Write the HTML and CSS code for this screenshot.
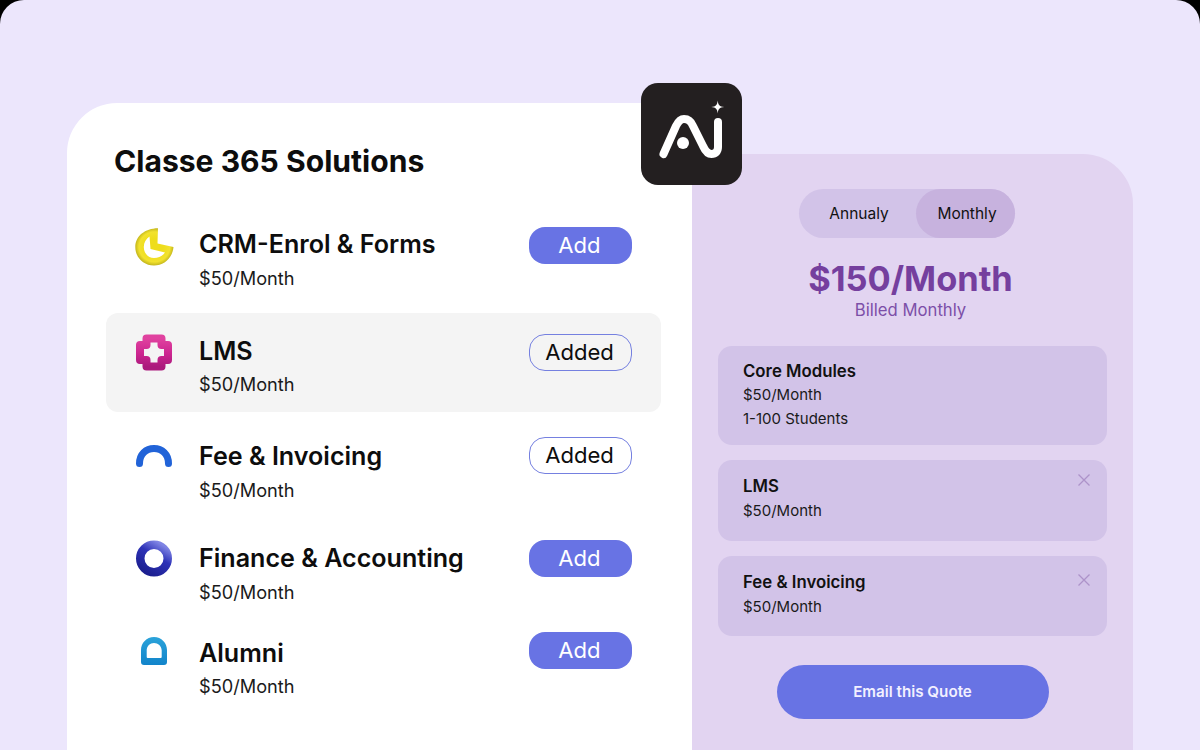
FILE: index.html
```html
<!DOCTYPE html>
<html lang="en">
<head>
<meta charset="utf-8">
<title>Classe 365 Solutions</title>
<link rel="stylesheet" href="styles.css">
</head>
<body>
<main class="stage">
  <section class="solutions">
    <h1 class="solutions-title">Classe 365 Solutions</h1>
    <ul class="module-list">
      <li class="module module-crm">
        <svg class="module-icon" viewBox="0 0 40 40"><defs><radialGradient id="gy" cx="0.5" cy="0.5" r="0.56"><stop offset="0.4" stop-color="#eedd1c"/><stop offset="0.72" stop-color="#f2e22e"/><stop offset="1" stop-color="#a89c12"/></radialGradient></defs><path transform="translate(2 1)" fill-rule="evenodd" d="M23 2.300C10 2.500 .3 10 .3 21C.3 31 8 39.500 19 39.500C29 39.500 37.500 32 38.500 21L22.500 17.500ZM14.500 10.500C11 13 8.800 16.500 8.800 21C8.800 27 13 32 19 32C23.500 32 27.500 30 30 26.500L15.500 23Z" fill="url(#gy)"/></svg>
        <div class="module-text"><h2 class="module-name">CRM-Enrol &amp; Forms</h2><p class="module-price">$50/Month</p></div>
        <span class="pill pill-add">Add</span>
      </li>
      <li class="module module-lms is-selected">
        <svg class="module-icon" viewBox="0 0 40 40"><defs><linearGradient id="gp" x1="0" y1="0" x2="0" y2="1"><stop offset="0" stop-color="#e0429f"/><stop offset="0.55" stop-color="#cc2590"/><stop offset="1" stop-color="#ab1a7c"/></linearGradient></defs><path d="M13.500 7.500H28.500V14H35V29H28.500V35.500H13.500V29H7V14H13.500Z" fill="none" stroke="url(#gp)" stroke-width="8" stroke-linejoin="round"/></svg>
        <div class="module-text"><h2 class="module-name">LMS</h2><p class="module-price">$50/Month</p></div>
        <span class="pill pill-added">Added</span>
      </li>
      <li class="module module-fee">
        <svg class="module-icon" viewBox="0 0 40 40"><path d="M6.500 26.500C6.500 17 13 11.500 21 11.500S35.500 17 35.500 26.500" fill="none" stroke="#2163d8" stroke-width="7" stroke-linecap="round"/></svg>
        <div class="module-text"><h2 class="module-name">Fee &amp; Invoicing</h2><p class="module-price">$50/Month</p></div>
        <span class="pill pill-added">Added</span>
      </li>
      <li class="module module-finance">
        <svg class="module-icon" viewBox="0 0 40 40"><defs><linearGradient id="gb" x1="0.8" y1="0" x2="0.2" y2="1"><stop offset="0" stop-color="#7f84e4"/><stop offset="0.4" stop-color="#2e33b8"/><stop offset="1" stop-color="#1c1f90"/></linearGradient></defs><circle cx="21" cy="19.500" r="13.750" fill="none" stroke="url(#gb)" stroke-width="8.500"/></svg>
        <div class="module-text"><h2 class="module-name">Finance &amp; Accounting</h2><p class="module-price">$50/Month</p></div>
        <span class="pill pill-add">Add</span>
      </li>
      <li class="module module-alumni">
        <svg class="module-icon" viewBox="0 0 40 40"><defs><linearGradient id="gc" x1="0" y1="0" x2="0" y2="1"><stop offset="0" stop-color="#2ba3da"/><stop offset="1" stop-color="#1284ca"/></linearGradient></defs><path fill-rule="evenodd" d="M21 4C28.500 4 34 10 34 17V29a3 3 0 0 1-3 3H11a3 3 0 0 1-3-3V17C8 10 13.500 4 21 4ZM21 10C17 10 13.700 13 13.700 17.500V24a1 1 0 0 0 1 1H27.700a1 1 0 0 0 1-1V17.500C28.700 13 25 10 21 10Z" fill="url(#gc)"/></svg>
        <div class="module-text"><h2 class="module-name">Alumni</h2><p class="module-price">$50/Month</p></div>
        <span class="pill pill-add">Add</span>
      </li>
    </ul>
  </section>

  <section class="quote">
    <div class="toggle"><span class="toggle-option">Annualy</span><span class="toggle-option is-active">Monthly</span></div>
    <p class="quote-amount">$150/Month</p>
    <p class="quote-billing">Billed Monthly</p>
    <div class="quote-items">
      <article class="quote-item quote-item-core"><h3 class="quote-item-name">Core Modules</h3><p class="quote-item-line">$50/Month</p><p class="quote-item-line">1-100 Students</p></article>
      <article class="quote-item quote-item-lms"><h3 class="quote-item-name">LMS</h3><p class="quote-item-line">$50/Month</p>
        <svg class="quote-remove" viewBox="0 0 14 14"><path d="M1.500 1.500l11 11M12.500 1.500l-11 11"/></svg></article>
      <article class="quote-item quote-item-fee"><h3 class="quote-item-name">Fee &amp; Invoicing</h3><p class="quote-item-line">$50/Month</p>
        <svg class="quote-remove" viewBox="0 0 14 14"><path d="M1.500 1.500l11 11M12.500 1.500l-11 11"/></svg></article>
    </div>
    <span class="email-button">Email this Quote</span>
  </section>

  <div class="ai-badge">
    <svg class="ai-mark" viewBox="0 0 101 102">
      <path class="ai-stroke" d="M22.500 71L35 43C37.500 38 40 36 43 36C47 36 50 38 52 43L62 63C64.500 68.500 67 71 70.500 71C74.500 71 77 68.500 77 64V39"/>
      <circle class="ai-fill" cx="42" cy="60" r="6"/>
      <path class="ai-fill" d="M76.700 17.500C77.300 22.300 78.400 23.400 83.200 24C78.400 24.600 77.300 25.700 76.700 30.500C76.100 25.700 75 24.600 70.200 24C75 23.400 76.100 22.300 76.700 17.500Z"/>
    </svg>
  </div>
</main>
</body>
</html>
```

FILE: styles.css
```css
* { box-sizing: border-box; }
html, body { margin: 0; padding: 0; }
body { width: 1200px; height: 750px; overflow: hidden; background: #000000; font-family: Inter, "Liberation Sans", sans-serif; }
h1, h2, h3, p, ul { margin: 0; padding: 0; }
ul { list-style: none; }

.stage {
  position: relative;
  display: flex;
  align-items: flex-start;
  width: 1200px;
  height: 750px;
  padding-left: 67px;
  overflow: hidden;
  background: #ece6fc;
  border-radius: 24px 24px 0 0;
}

.solutions {
  flex: 0 0 625px;
  height: 647px;
  margin-top: 103px;
  padding: 38px 31px 0 39px;
  background: #ffffff;
  border-radius: 50px 50px 0 0;
}
.solutions-title { padding-left: 8px; font-size: 30.100px; line-height: 40px; font-weight: 700; color: #0d0d0d; }

.module-list { margin-top: 26px; }
.module {
  display: flex;
  align-items: flex-start;
  height: 99px;
  padding: 22px 29px 0 27px;
  border-radius: 12px;
}
.module.is-selected { background: #f4f4f4; }
.module-crm { margin-bottom: 7px; }
.module-lms { margin-bottom: 7px; padding-top: 23px; }
.module-fee { margin-bottom: 3px; }
.module-finance { margin-bottom: -5px; }
.module-alumni { padding-top: 23px; }

.module-icon { flex: 0 0 40px; width: 40px; height: 40px; margin-top: -4px; overflow: visible; }
.module-lms .module-icon, .module-alumni .module-icon { margin-top: -5px; }
.module-text { flex: 1; margin-left: 26px; }
.module-name { font-size: 25.100px; line-height: 30px; font-weight: 600; color: #0d0d0d; }
.module-price { margin-top: 8px; font-size: 18.200px; line-height: 22px; color: #1a1a1a; }
.module-lms .module-price, .module-alumni .module-price { margin-top: 7px; }

.pill {
  display: flex;
  align-items: center;
  justify-content: center;
  flex: 0 0 103px;
  width: 103px;
  height: 37px;
  padding: 0 2px 2px 0;
  border-radius: 16px;
  font-size: 22.100px;
}
.module-crm .pill { margin-top: -2px; }
.module-lms .pill { margin-top: -2px; }
.module-fee .pill { margin-top: -4px; }
.module-finance .pill { margin-top: -3px; }
.module-alumni .pill { margin-top: -6px; }
.pill-add { background: #6873e4; color: #ffffff; }
.pill-added { background: transparent; border: 1px solid #7580e0; color: #0d0d0d; }

.quote {
  flex: 0 0 441px;
  height: 596px;
  margin-top: 154px;
  padding: 35px 26px 0;
  background: #e2d4f1;
  border-radius: 0 50px 0 0;
  display: flex;
  flex-direction: column;
  align-items: center;
}
.toggle {
  display: flex;
  width: 216px;
  height: 49px;
  margin-right: 12px;
  background: #d2c3e8;
  border-radius: 25px;
}
.toggle-option {
  display: flex;
  align-items: center;
  justify-content: center;
  flex: 1;
  padding-left: 4px;
  font-size: 15.500px;
  color: #111111;
}
.toggle-option.is-active { flex: 0 0 99px; background: #c7b2de; border-radius: 25px; }

.quote-amount { margin: 20px 4px 0 0; font-size: 34.400px; line-height: 42px; font-weight: 700; color: #753f9e; }
.quote-billing { margin: 0 4px 0 0; font-size: 16.700px; line-height: 20px; color: #7c4fa8; }

.quote-items { display: flex; flex-direction: column; gap: 15px; align-self: stretch; margin-top: 26px; }
.quote-item { position: relative; padding: 15px 25px 0; background: #d2c3e8; border-radius: 14px; }
.quote-item-core { height: 99px; }
.quote-item-lms { height: 81px; padding-top: 16px; }
.quote-item-fee { height: 80px; padding-top: 16px; }
.quote-item-name { font-size: 16.800px; line-height: 20px; font-weight: 600; color: #111111; }
.quote-item-line { margin-top: 4px; font-size: 15px; line-height: 20px; color: #1a1a1a; }
.quote-item-lms .quote-item-line, .quote-item-fee .quote-item-line { margin-top: 5px; }
.quote-remove { position: absolute; top: 13px; right: 16px; width: 14px; height: 14px; fill: none; stroke: #ad93c9; stroke-width: 1.300; }
.quote-item-fee .quote-remove { top: 17px; }

.email-button {
  display: flex;
  align-items: center;
  justify-content: center;
  width: 272px;
  height: 54px;
  margin-top: 29px;
  padding-bottom: 2px;
  background: #6873e4;
  border-radius: 27px;
  font-size: 15.200px;
  font-weight: 600;
  color: #f2f0ff;
}

.ai-badge {
  position: absolute;
  left: 641px;
  top: 83px;
  width: 101px;
  height: 102px;
  background: #231f20;
  border-radius: 17px;
}
.ai-mark { display: block; width: 100%; height: 100%; }
.ai-stroke { fill: none; stroke: #ffffff; stroke-width: 8; stroke-linecap: round; stroke-linejoin: round; }
.ai-fill { fill: #ffffff; }
```
